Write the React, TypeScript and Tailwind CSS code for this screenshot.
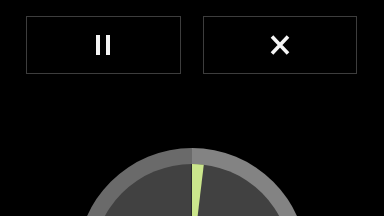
import React from "react";

function PauseIcon() {
  return (
    <svg width="16" height="20" viewBox="0 0 16 20">
      <rect x="1" y="0" width="4" height="20" fill="#f5f5f5" />
      <rect x="11" y="0" width="4" height="20" fill="#f5f5f5" />
    </svg>
  );
}

function CloseIcon() {
  return (
    <svg width="22" height="20" viewBox="0 0 22 20">
      <path d="M3 1.5 L19 18.5 M19 1.5 L3 18.5" stroke="#f5f5f5" strokeWidth="3.6" strokeLinecap="butt" />
    </svg>
  );
}

function Gauge({ progress }: { progress: number }) {
  const cx = 115;
  const cy = 115;
  const r = 99;
  const a = (progress * 360 * Math.PI) / 180;
  const ex = cx + r * Math.sin(a);
  const ey = cy - r * Math.cos(a);
  return (
    <svg width="230" height="230" viewBox="0 0 230 230" className="shrink-0">
      <path d="M115 0 A115 115 0 0 0 115 230 Z" fill="#6a6a6a" />
      <path d="M115 0 A115 115 0 0 1 115 230 Z" fill="#838383" />
      <circle cx={cx} cy={cy} r={r} fill="#414141" />
      <path d={`M${cx} ${cy} L${cx} ${cy - r} A${r} ${r} 0 0 1 ${ex} ${ey} Z`} fill="#cbe68c" />
      <line x1="114.5" y1={cy - r} x2="114.5" y2={cy} stroke="#2c2c2c" strokeWidth="1" />
    </svg>
  );
}

export default function App() {
  return (
    <div className="w-full h-[216px] bg-black overflow-hidden flex flex-col items-center">
      <div className="w-full grid grid-cols-2 gap-[22px] pl-[26px] pr-[27px] mt-[16px]">
        <button className="h-[58px] border border-[#3d3d3d] flex items-center justify-center">
          <PauseIcon />
        </button>
        <button className="h-[58px] border border-[#3d3d3d] flex items-center justify-center">
          <CloseIcon />
        </button>
      </div>
      <div className="mt-[74px]">
        <Gauge progress={0.019} />
      </div>
    </div>
  );
}
